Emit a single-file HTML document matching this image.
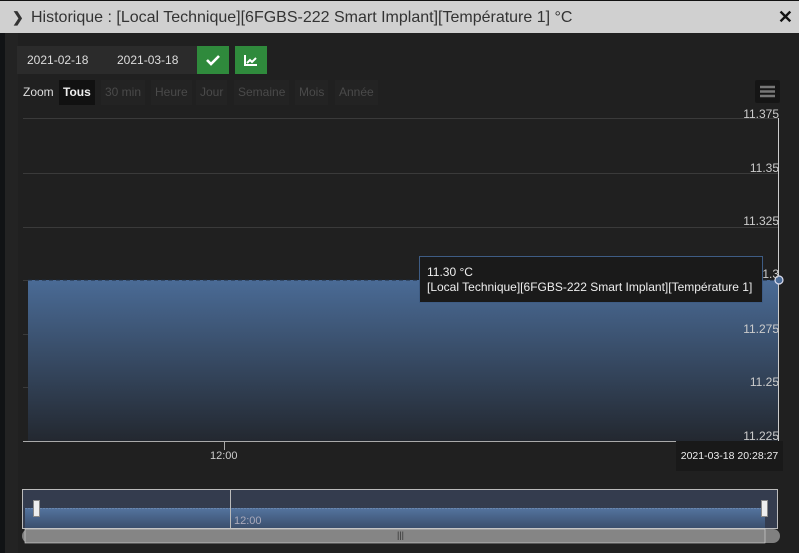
<!DOCTYPE html>
<html><head><meta charset="utf-8"><style>
*{margin:0;padding:0;box-sizing:border-box}
body{width:799px;height:553px;overflow:hidden;background:#202020;font-family:"Liberation Sans",Arial,sans-serif;position:relative}
.hdr{position:absolute;left:0;top:0;width:799px;height:33px;background:#d0d0d0;border-top:1px solid #111;color:#333;font-size:16px;line-height:33px;padding-left:31px}
.hdr .ar{position:absolute;left:12px;top:0;font-weight:bold;font-size:14px}
.hdr .x{position:absolute;right:6px;top:0;font-weight:bold;font-size:18px;color:#111}
.lstrip{position:absolute;left:0;top:33px;width:5px;height:520px;background:#111315}
.lstrip2{position:absolute;left:5px;top:33px;width:13px;height:520px;background:#232323}
.main{position:absolute;left:18px;top:33px;width:781px;height:520px;background:#202020}
.date{position:absolute;top:46px;height:28px;background:#2b2b2b;color:#ddd;font-size:12px;line-height:28px}
.btn{position:absolute;top:46px;width:32px;height:28px;background:#2f8a3c}
.zb{position:absolute;top:80px;height:25px;line-height:24px;font-size:12px;color:#4a4a4a;background:#232323;padding:0 4px}
.ax{position:absolute;font-size:12px;color:#ccc;text-align:right;width:60px}
</style></head><body>
<div class="hdr"><span class="ar">&#10095;</span>Historique : [Local Technique][6FGBS-222 Smart Implant][Température 1] °C<span class="x">✕</span></div>
<div class="lstrip"></div><div class="lstrip2"></div>
<div class="main"></div>
<div class="date" style="left:17px;width:180px;padding-left:10px">2021-02-18<span style="position:absolute;left:100px">2021-03-18</span></div>
<div class="btn" style="left:197px"><svg width="32" height="28"><path d="M10 14l4 4 8-8" stroke="#fff" stroke-width="2.6" fill="none"/></svg></div>
<div class="btn" style="left:235px"><svg width="32" height="28"><path d="M10 9v10h12" stroke="#fff" stroke-width="2" fill="none"/><path d="M12 17l3-3 2 2 4-4" stroke="#fff" stroke-width="2" fill="none"/></svg></div>
<div style="position:absolute;left:23px;top:80px;font-size:12px;color:#ddd;line-height:24px">Zoom</div>
<div class="zb" style="left:59px;width:36px;background:#111;color:#eee;font-weight:bold">Tous</div>
<div class="zb" style="left:101px">30 min</div>
<div class="zb" style="left:151px">Heure</div>
<div class="zb" style="left:196px">Jour</div>
<div class="zb" style="left:234px">Semaine</div>
<div class="zb" style="left:295px">Mois</div>
<div class="zb" style="left:335px">Année</div>
<div style="position:absolute;left:755px;top:80px;width:25px;height:23px;background:#151515;border-radius:2px"><svg width="25" height="23"><path d="M5 7h15M5 11.5h15M5 16h15" stroke="#777" stroke-width="2.5"/></svg></div>
<svg style="position:absolute;left:0;top:0" width="799" height="553">
<defs><linearGradient id="g" x1="0" y1="0" x2="0" y2="1"><stop offset="0" stop-color="#4a6b96"/><stop offset="1" stop-color="#232830"/></linearGradient>
<linearGradient id="g2" x1="0" y1="0" x2="0" y2="1"><stop offset="0" stop-color="#54749f"/><stop offset="1" stop-color="#3b4f6d"/></linearGradient></defs>
<g stroke="#3a3a3a" stroke-width="1">
<line x1="23" x2="778" y1="118.5" y2="118.5"/><line x1="23" x2="778" y1="173.5" y2="173.5"/><line x1="23" x2="778" y1="227.5" y2="227.5"/><line x1="23" x2="778" y1="280.5" y2="280.5"/><line x1="23" x2="778" y1="334.5" y2="334.5"/><line x1="23" x2="778" y1="387.5" y2="387.5"/></g>
<rect x="28" y="280" width="751" height="161" fill="url(#g)"/>
<line x1="28" x2="779" y1="280" y2="280" stroke="#1c2838" stroke-dasharray="4 3"/>
<line x1="23" x2="779" y1="441.5" y2="441.5" stroke="#aaa"/>
<line x1="224.5" x2="224.5" y1="441" y2="450" stroke="#aaa"/>
<line x1="778.5" x2="778.5" y1="118" y2="441" stroke="#ccc"/>
<circle cx="779" cy="280" r="4" fill="#4a6b96" stroke="#dde" stroke-width="1.2"/>
<rect x="22.5" y="489.5" width="755" height="39" fill="#343c4e" stroke="#bbb"/>
<rect x="25" y="508" width="740" height="20" fill="url(#g2)"/>
<line x1="25" x2="765" y1="508.5" y2="508.5" stroke="#6a86ad" stroke-dasharray="2 1"/>
<line x1="230.5" x2="230.5" y1="490" y2="528" stroke="#bbb"/>
<rect x="33.5" y="500.5" width="6" height="16" fill="#eee" stroke="#888"/>
<rect x="761.5" y="500.5" width="6" height="16" fill="#eee" stroke="#888"/>
<rect x="22" y="529" width="758" height="14" rx="7" fill="#808080"/>
<rect x="25" y="529" width="740" height="14" fill="#858585" stroke="#ddd" stroke-width="0.6"/>
</svg>
<div style="position:absolute;left:234px;top:515px;font-size:11px;color:#aab">12:00</div>
<div style="position:absolute;left:397px;top:530px;font-size:9px;color:#333">|||</div>
<div class="ax" style="left:719px;top:107px">11.375</div>
<div class="ax" style="left:719px;top:161px">11.35</div>
<div class="ax" style="left:719px;top:214px">11.325</div>
<div class="ax" style="left:719px;top:267px">11.3</div>
<div class="ax" style="left:719px;top:322px">11.275</div>
<div class="ax" style="left:719px;top:375px">11.25</div>
<div class="ax" style="left:719px;top:429px">11.225</div>
<div style="position:absolute;left:210px;top:450px;font-size:11px;color:#ccc">12:00</div>
<div style="position:absolute;left:419px;top:256px;width:344px;height:47px;background:#1a1a1a;border:1px solid #3e5c84;color:#eee;font-size:12px;padding:8px 7px;line-height:15px">11.30 °C<br>[Local Technique][6FGBS-222 Smart Implant][Température 1]</div>
<div style="position:absolute;left:676px;top:441px;width:107px;height:30px;background:#191919;color:#eee;font-size:10.5px;line-height:30px;text-align:center">2021-03-18 20:28:27</div>
</body></html>
